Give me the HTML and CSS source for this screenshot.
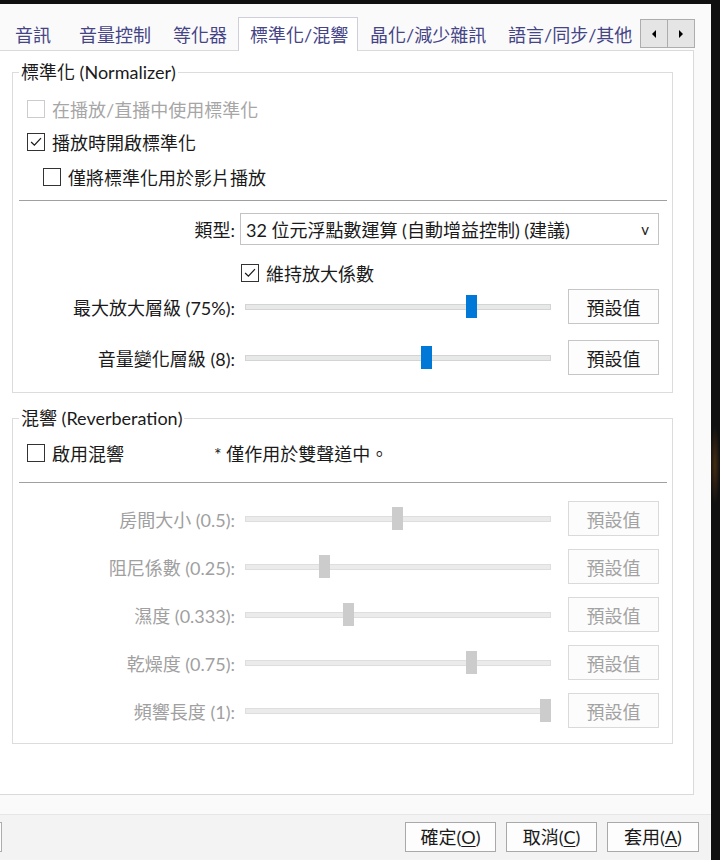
FILE: index.html
```html
<!DOCTYPE html>
<html lang="zh-Hant">
<head>
    <meta charset="UTF-8">
    <meta name="viewport" content="width=device-width, initial-scale=1.0">
    <title>偏好設定 - 標準化/混響</title>
    <link rel="stylesheet" href="styles.css">
</head>
<body>
    <div class="window">
        <div class="tab-row">
            <div class="tab t1">音訊</div>
            <div class="tab t2">音量控制</div>
            <div class="tab t3">等化器</div>
            <div class="tab t4 active">標準化/混響</div>
            <div class="tab t5">晶化/減少雜訊</div>
            <div class="tab t6">語言/同步/其他</div>
            <div class="tab-scroll">
                <span class="scroll-btn"><span class="arrow left"></span></span>
                <span class="scroll-btn"><span class="arrow right"></span></span>
            </div>
        </div>

        <div class="panel">
            <fieldset class="group normalizer">
                <legend>標準化 (Normalizer)</legend>
                <div class="check disabled n1"><span class="box"></span>在播放/直播中使用標準化</div>
                <div class="check n2"><span class="box checked"><svg viewBox="0 0 18 18"><polyline points="3.5,9 7.2,12.6 14.6,4.6"/></svg></span>播放時開啟標準化</div>
                <div class="check n3"><span class="box"></span>僅將標準化用於影片播放</div>
                <div class="sep"></div>
                <div class="row combo-row">
                    <div class="label">類型:</div>
                    <div class="combo"><span>32 位元浮點數運算 (自動增益控制) (建議)</span><span class="drop">v</span></div>
                </div>
                <div class="check keep"><span class="box checked"><svg viewBox="0 0 18 18"><polyline points="3.5,9 7.2,12.6 14.6,4.6"/></svg></span>維持放大係數</div>
                <div class="row slider-row first-n">
                    <div class="label">最大放大層級 (75%):</div>
                    <div class="slider" style="--v: 0.75"><div class="track"></div><div class="thumb"></div></div>
                    <button class="reset">預設值</button>
                </div>
                <div class="row slider-row">
                    <div class="label">音量變化層級 (8):</div>
                    <div class="slider" style="--v: 0.597"><div class="track"></div><div class="thumb"></div></div>
                    <button class="reset">預設值</button>
                </div>
            </fieldset>

            <fieldset class="group reverb">
                <legend>混響 (Reverberation)</legend>
                <div class="check r1"><span class="box"></span>啟用混響<span class="note">* 僅作用於雙聲道中。</span></div>
                <div class="sep"></div>
                <div class="row slider-row off first-r">
                    <div class="label">房間大小 (0.5):</div>
                    <div class="slider" style="--v: 0.498"><div class="track"></div><div class="thumb"></div></div>
                    <button class="reset" disabled>預設值</button>
                </div>
                <div class="row slider-row off">
                    <div class="label">阻尼係數 (0.25):</div>
                    <div class="slider" style="--v: 0.25"><div class="track"></div><div class="thumb"></div></div>
                    <button class="reset" disabled>預設值</button>
                </div>
                <div class="row slider-row off">
                    <div class="label">濕度 (0.333):</div>
                    <div class="slider" style="--v: 0.332"><div class="track"></div><div class="thumb"></div></div>
                    <button class="reset" disabled>預設值</button>
                </div>
                <div class="row slider-row off">
                    <div class="label">乾燥度 (0.75):</div>
                    <div class="slider" style="--v: 0.75"><div class="track"></div><div class="thumb"></div></div>
                    <button class="reset" disabled>預設值</button>
                </div>
                <div class="row slider-row off">
                    <div class="label">頻響長度 (1):</div>
                    <div class="slider" style="--v: 1"><div class="track"></div><div class="thumb"></div></div>
                    <button class="reset" disabled>預設值</button>
                </div>
            </fieldset>
        </div>

        <div class="footer">
            <span class="stub"></span>
            <button class="dlg-btn">確定(<u>O</u>)</button>
            <button class="dlg-btn">取消(<u>C</u>)</button>
            <button class="dlg-btn wide">套用(<u>A</u>)</button>
        </div>
    </div>
</body>
</html>
```

FILE: styles.css
```css
body {
    margin: 0;
    width: 720px;
    height: 860px;
    overflow: hidden;
    background: radial-gradient(ellipse 5px 40px at 715px 465px, rgba(120, 70, 20, 0.5), transparent), #101010;
    font-family: Lato, "Noto Sans CJK TC", sans-serif;
    font-size: 18px;
    color: #1a1a1a;
}
.window {
    margin-top: 4px;
    width: 711px;
    height: 856px;
    background-color: #fafafa;
    display: flex;
    flex-direction: column;
}

/* tabs */
.tab-row {
    height: 46px;
    display: flex;
    align-items: flex-end;
    padding-left: 3px;
}
.tab {
    box-sizing: border-box;
    height: 29px;
    line-height: 28px;
    padding-left: 12px;
    color: #444487;
    white-space: nowrap;
}
.t1 { width: 64px; }
.t2 { width: 94px; }
.t3 { width: 77px; }
.t4 { width: 120px; }
.t5 { width: 138px; }
.t6 { width: 144px; }
.tab.active {
    height: 34px;
    padding-top: 3px;
    padding-left: 11px;
    background-color: #fff;
    border: 1px solid #cfcfdc;
    border-bottom: none;
    margin-bottom: -1px;
    position: relative;
    z-index: 1;
}
.tab-scroll {
    display: flex;
    height: 27px;
    margin-bottom: 2px;
    border: 1px solid #adadad;
    background-color: #e5e5e5;
}
.scroll-btn {
    width: 26px;
    display: flex;
    align-items: center;
    justify-content: center;
}
.scroll-btn + .scroll-btn {
    border-left: 1px solid #adadad;
}
.arrow {
    width: 0;
    height: 0;
    border-top: 4px solid transparent;
    border-bottom: 4px solid transparent;
}
.arrow.left { border-right: 4px solid #000; }
.arrow.right { border-left: 4px solid #000; }

/* panel */
.panel {
    box-sizing: border-box;
    margin-left: -1px;
    width: 695px;
    height: 745px;
    background-color: #fff;
    border: 1px solid #dadada;
    padding: 10px 20px 0 12px;
}
.group {
    margin: 0;
    padding: 0 0 15px 0;
    border: 1px solid #dcdcdc;
    min-width: 0;
}
.group legend {
    margin-left: 6px;
    padding: 0 2px;
    line-height: 22px;
    color: #1a1a1a;
}
.normalizer {
    padding-bottom: 17px;
}
.reverb {
    margin-top: 14px;
}

/* checkboxes */
.check {
    display: flex;
    align-items: center;
    height: 24px;
    margin-left: 14px;
    white-space: nowrap;
}
.box {
    box-sizing: border-box;
    width: 18px;
    height: 18px;
    border: 1px solid #333;
    background-color: #fff;
    margin-right: 7px;
    flex: none;
}
.box svg {
    display: block;
    width: 16px;
    height: 16px;
    fill: none;
    stroke: #1a1a1a;
    stroke-width: 1.4;
}
.check.disabled { color: #a6a6a6; }
.check.disabled .box { border-color: #cccccc; }
.n1 { margin-top: 14px; }
.n2 { margin-top: 9px; }
.n3 { margin-top: 11px; margin-left: 30px; }
.keep { margin-top: 16px; margin-left: 228px; }
.r1 { margin-top: 12px; }
.note { margin-left: 90px; }

.sep {
    height: 1px;
    background-color: #a0a0a0;
    margin: 11px 5px 0 6px;
}
.reverb .sep { margin-top: 17px; }

/* rows */
.row {
    display: flex;
    align-items: center;
}
.label {
    width: 222px;
    text-align: right;
    margin-right: 5px;
    white-space: nowrap;
}
.combo-row { margin-top: 12px; }
.combo {
    box-sizing: border-box;
    width: 419px;
    height: 32px;
    border: 1px solid #c3c3c3;
    background-color: #fff;
    display: flex;
    align-items: center;
    justify-content: space-between;
    padding: 0 9px 0 5px;
    white-space: nowrap;
}
.drop {
    font-size: 15px;
    color: #222;
}
.slider-row {
    height: 35px;
    margin-top: 16px;
}
.slider-row.first-n { margin-top: 4px; }
.reverb .slider-row { margin-top: 13px; }
.reverb .slider-row.first-r { margin-top: 18px; }
.slider {
    position: relative;
    width: 311px;
    height: 23px;
}
.track {
    box-sizing: border-box;
    width: 306px;
    height: 6px;
    margin: 9px 0 0 5px;
    background-color: #e7e9e9;
    border: 1px solid #d4d4d4;
}
.thumb {
    position: absolute;
    top: 0;
    left: calc(5px + var(--v) * 295px);
    width: 11px;
    height: 23px;
    background-color: #0078d7;
}
.reset {
    box-sizing: border-box;
    margin-left: 17px;
    width: 91px;
    height: 35px;
    border: 1px solid #c6c6c6;
    background-color: #fdfdfd;
    font-family: inherit;
    font-size: 18px;
    color: #1a1a1a;
    padding: 0;
}
.off .label { color: #a0a0a0; }
.off .track {
    background-color: #ebebeb;
    border-color: #dedede;
}
.off .thumb { background-color: #cccccc; }
.reset:disabled {
    color: #a2a2a2;
    border-color: #dadada;
    background-color: #fcfcfc;
}

/* dialog buttons */
.footer {
    margin-top: 19px;
    flex: 1;
    border-top: 1px solid #e6e6e6;
    background-color: #f3f3f3;
    display: flex;
    align-items: flex-start;
    gap: 10px;
    padding: 7px 12px 0 0;
}
.stub {
    box-sizing: border-box;
    margin-left: -90px;
    margin-right: auto;
    width: 92px;
    height: 30px;
    border: 1px solid #adadad;
    background-color: #fdfdfd;
}
.dlg-btn {
    box-sizing: border-box;
    width: 91px;
    height: 30px;
    border: 1px solid #a9a9a9;
    background-color: #fdfdfd;
    font-family: inherit;
    font-size: 18px;
    line-height: 26px;
    color: #1a1a1a;
    padding: 0;
}
.dlg-btn.wide { width: 92px; }
.dlg-btn u { text-underline-offset: 2px; }
```
